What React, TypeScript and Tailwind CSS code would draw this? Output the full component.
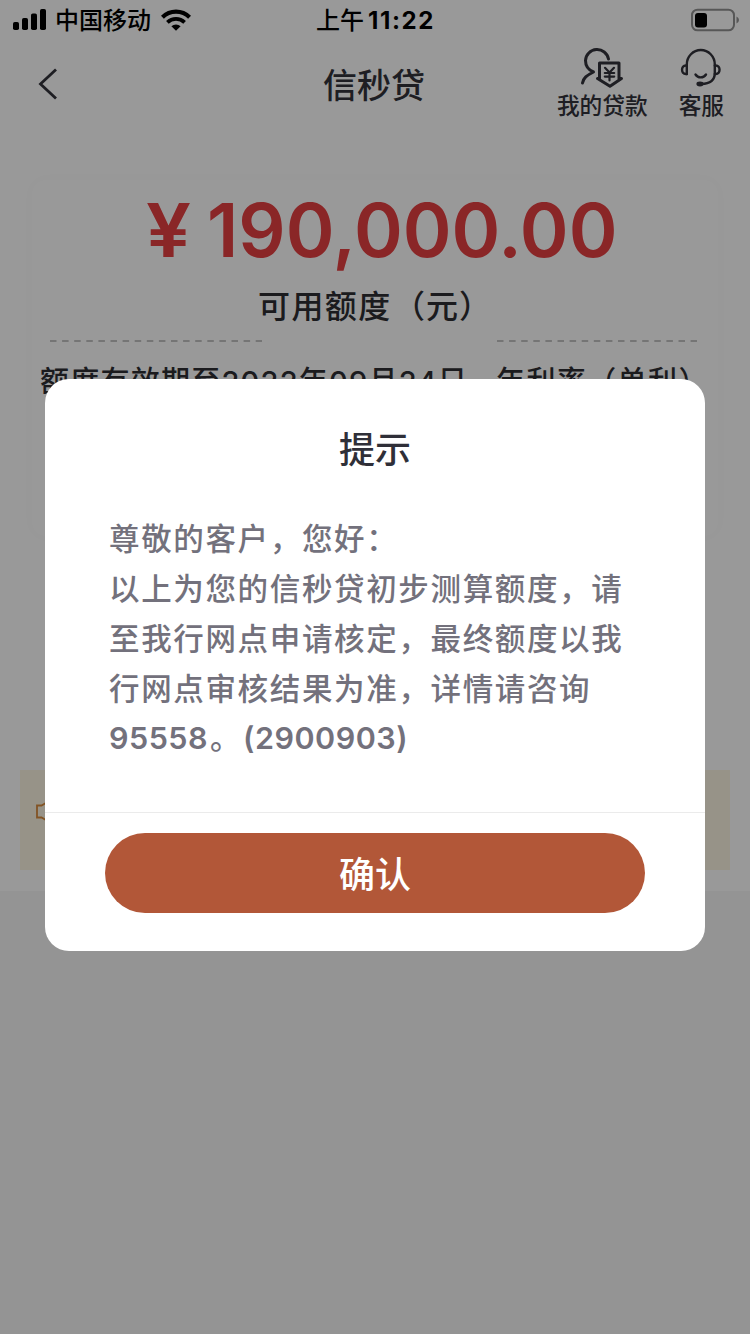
import type { ReactNode } from 'react';

function StatusBar() {
  return (
    <div className="flex h-10 items-center text-black">
      <div className="flex w-[250px] items-center pl-[13px]">
        <svg width="34" height="22" viewBox="0 0 34 22" fill="currentColor">
          <rect x="0" y="13" width="6" height="8" rx="1.8" />
          <rect x="9" y="9" width="6" height="12" rx="1.8" />
          <rect x="18" y="4.5" width="6" height="16.5" rx="1.8" />
          <rect x="27" y="0" width="6" height="21" rx="1.8" />
        </svg>
        <span className="ml-[8px] pt-[2px] text-[24px] leading-10 font-medium">中国移动</span>
        <svg className="ml-[10px]" width="30" height="22" viewBox="0 0 30 22" fill="none" stroke="currentColor">
          <path d="M1.4 8.2a19.4 19.4 0 0 1 27.2 0" strokeWidth="4.2" />
          <path d="M6.4 13.3a12.4 12.4 0 0 1 17.2 0" strokeWidth="3.8" />
          <path d="M10.4 17.3a6.8 6.8 0 0 1 9.2 0L15 21.8z" fill="currentColor" stroke="none" />
        </svg>
      </div>
      <div className="flex w-[250px] items-center pt-[2px] pl-[66px] leading-10">
        <span className="text-[24px] font-medium">上午</span>
        <span className="ml-[4px] text-[24px] font-bold tracking-[1.600px]">11:22</span>
      </div>
      <div className="flex flex-1 justify-end pr-[10px]">
        <svg width="50" height="24" viewBox="0 0 50 24">
          <rect x="2" y="1.7" width="42" height="20.6" rx="5.5" fill="none" stroke="#919191" strokeWidth="2" />
          <rect x="5" y="5" width="12" height="14.5" rx="3" fill="#000" />
          <path d="M46.500 8.500v7q2.500-1.200 2.500-3.500t-2.500-3.500z" fill="#919191" />
        </svg>
      </div>
    </div>
  );
}

function HeaderAction({ label, children }: { label: string; children: ReactNode }) {
  return (
    <div className="flex flex-col items-center">
      {children}
      <span className="pt-px text-[22.7px] leading-[32px] font-medium whitespace-nowrap">{label}</span>
    </div>
  );
}

function Header() {
  return (
    <div className="flex h-[90px] text-[#33333b]">
      <div className="w-[250px] pt-[28px] pl-[38px]">
        <svg width="20" height="32" viewBox="0 0 20 32" fill="none" stroke="currentColor" strokeWidth="2.8">
          <path d="M18 1.500L2.500 16l15.500 14.500" />
        </svg>
      </div>
      <div className="w-[250px] pt-[21px] pr-[2px] text-center text-[34px] leading-[50px] font-medium">信秒贷</div>
      <div className="flex flex-1 justify-end gap-[31px] pt-[7px] pr-[26px]">
        <HeaderAction label="我的贷款">
          <svg width="44" height="42" viewBox="0 0 44 42" fill="none" stroke="currentColor" strokeWidth="3" strokeLinecap="round" strokeLinejoin="round">
            <path d="M2.500 36C3.500 31 6.500 28.500 13.500 25C7.500 22.500 5.500 18 5.500 13.500a11.600 11.500 0 0 1 23-1.500" />
            <path d="M19.500 16h19.500v15.500h2.500L30 39.300l-12.500-7.800h2z" />
            <path d="M25 20.800l4.500 4.700 4.500-4.700M24.800 26h9.400M24.800 29.600h9.400M29.500 25.500v8" strokeWidth="2.200" />
          </svg>
        </HeaderAction>
        <HeaderAction label="客服">
          <svg width="42" height="42" viewBox="0 0 42 42" fill="none" stroke="currentColor" strokeWidth="2.400" strokeLinecap="round">
            <path d="M6.800 27V17.500a14 14.500 0 0 1 28 0V26c0 7-4 10.800-13.500 11" />
            <path d="M6.800 18.500h-1c-5 0-5 8.500 0 8.500h1M34.800 18.500h1c5 0 5 8.500 0 8.500h-1" />
            <path d="M15.500 27.500c2.500 3.800 8 3.800 10.500 0" />
            <ellipse cx="20" cy="37" rx="2.400" ry="1.200" fill="currentColor" />
          </svg>
        </HeaderAction>
      </div>
    </div>
  );
}

function DashedLine({ width }: { width: number }) {
  return (
    <svg width={width} height="2" viewBox={`0 0 ${width} 2`}>
      <path d={`M0 1H${width}`} stroke="#c4c4c4" strokeWidth="2" strokeDasharray="6.5 5.600" />
    </svg>
  );
}

function QuotaCard() {
  return (
    <div className="mx-[32px] mt-[50px] h-[356px] rounded-[14px] bg-white px-[8px] shadow-[0_0_14px_rgba(0,0,0,0.02)]">
      <div className="flex h-[100px] items-center pl-[106px] text-[74px] font-semibold text-[#e64042]">
        <span className="w-[61px]"><span className="inline-block origin-left scale-x-[1.08]">¥</span></span>
        <span>190,000.00</span>
      </div>
      <div className="flex pt-px pl-[218px] text-[32px] leading-[52px] font-medium tracking-[1.400px] whitespace-nowrap text-[#2e2e33]">
        <span className="w-[135px]">可用额度</span>
        <span className="w-[33px]">（</span>
        <span className="w-[33px]">元</span>
        <span>）</span>
      </div>
      <div className="mt-[7px] flex justify-between pr-[13px] pl-[10px]">
        <DashedLine width={212} />
        <DashedLine width={200} />
      </div>
      <div className="mt-[18px] flex text-[29px] leading-[44px] font-medium tracking-[1.400px] whitespace-nowrap text-[#2e2e33]">
        <span className="w-[456px] tracking-[1.250px]">额度有效期至2022年09月24日</span>
        <span>年利率（单利）</span>
      </div>
    </div>
  );
}

function Dialog() {
  return (
    <div className="flex h-[572px] w-[660px] flex-col rounded-[24px] bg-white">
      <h2 className="mt-[44px] text-center text-[36px] leading-[54px] font-medium text-[#2f2f38]">提示</h2>
      <div className="mt-[37px] h-[298px] pl-[64px] text-[30.500px] leading-[50px] font-medium tracking-[1.650px] whitespace-nowrap text-[#73717c]">
        <p>尊敬的客户，您好：</p>
        <p>以上为您的信秒贷初步测算额度，请</p>
        <p>至我行网点申请核定，最终额度以我</p>
        <p>行网点审核结果为准，详情请咨询</p>
        <p className="-mt-px font-semibold tracking-[0.500px]">95558<span className="mx-[2px] font-medium">。</span>(2900903)</p>
      </div>
      <div className="h-px bg-[#ebebeb]" />
      <button className="mx-[60px] mt-[20px] h-20 rounded-full bg-[#b25738] pt-[5px] text-[36px] leading-[75px] font-medium text-white">确认</button>
    </div>
  );
}

export default function App() {
  return (
    <div className="relative h-[1334px] w-[750px] overflow-hidden bg-[#f7f7f7] font-['Inter','Noto_Sans_CJK_SC',sans-serif]">
      <div className="h-[891px] bg-white">
        <StatusBar />
        <Header />
        <QuotaCard />
        <div className="mx-[20px] mt-[234px] flex h-[100px] bg-[#fcf6e3] pt-[30px] pl-[16px]">
          <svg width="24" height="24" viewBox="0 0 24 24" fill="none" stroke="#d98b3c" strokeWidth="1.800">
            <path d="M1 5.500h4.500L15 0v23l-9.500-5.500H1z" />
          </svg>
        </div>
      </div>
      <div className="absolute inset-0 flex items-start justify-center bg-black/40 pt-[379px]">
        <Dialog />
      </div>
    </div>
  );
}
